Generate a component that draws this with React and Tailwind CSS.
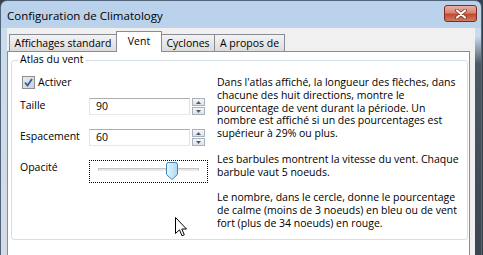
import React from 'react';

function SpinBox({ value }) {
  return (
    <div className="flex">
      <div className="w-[101px] h-[17px] border border-[#abadb3] border-l-[#e2e3ea] border-r-[#dbdfe6] border-b-[#e3e9ef] bg-white pl-[6px] text-[10.5px] leading-[15px]">
        {value}
      </div>
      <div className="ml-[2px] w-[13px] flex flex-col gap-px">
        {['up', 'down'].map((dir) => (
          <div key={dir} className="h-[8px] border border-[#a7b0bd] bg-gradient-to-b from-[#f7f7f7] to-[#dde1e6] flex items-center justify-center">
            <svg width="5" height="3" viewBox="0 0 5 3">
              <path d={dir === 'up' ? 'M0 3 L2.5 0 L5 3 Z' : 'M0 0 L2.5 3 L5 0 Z'} fill="#4d5a6e" />
            </svg>
          </div>
        ))}
      </div>
    </div>
  );
}

function Tab({ label, width, selected, className = '' }) {
  if (selected) {
    return (
      <div className={`relative z-10 -mb-px h-[21px] ${width} border border-b-0 border-[#898c95] bg-white flex justify-center pt-[2px] text-[10.5px] leading-[14px] ${className}`}>
        {label}
      </div>
    );
  }
  return (
    <div className={`h-[17px] ${width} border-t border-[#898c95] bg-gradient-to-b from-[#f3f3f3] to-[#dcdcdc] flex justify-center pt-[1px] text-[10.5px] leading-[14px] ${className}`}>
      {label}
    </div>
  );
}

export default function App() {
  return (
    <div className="relative w-[483px] h-[255px] overflow-hidden bg-[#36414c] font-['Open_Sans',sans-serif] text-black">
      <div className="w-[482px] h-[270px] rounded-t-[7px] border border-[#52647a] bg-gradient-to-b from-[#b9d1ea] to-[#cddff2] flex flex-col">
        {/* title bar */}
        <div className="h-[27px] flex items-start justify-between">
          <span className="ml-[6px] mt-[6px] text-[11.5px] leading-[17px]">Configuration de Climatology</span>
          <div className="mt-[4px] mr-[4px] w-[33px] h-[17px] rounded-[3px] border border-[#7e2c1e] bg-[linear-gradient(to_bottom,#eab1a3_0%,#d98470_45%,#c04a31_55%,#d47a5f_100%)] flex items-center justify-center">
            <svg width="12" height="10" viewBox="0 0 12 10">
              <path d="M2 1.5 L10 8.5 M10 1.5 L2 8.5" stroke="#6e2a1e" strokeWidth="3.6" strokeLinecap="round" />
              <path d="M2 1.5 L10 8.5 M10 1.5 L2 8.5" stroke="#ffffff" strokeWidth="2.2" strokeLinecap="round" />
            </svg>
          </div>
        </div>

        <div className="flex flex-1">
          <div className="w-[6px] bg-gradient-to-b from-[#c9dbee] to-[#d6dbe4]" />

          {/* client area */}
          <div className="flex-1 bg-[#f0f0f0] flex flex-col">
            <div className="mt-[3px] ml-[2px] h-[20px] flex items-end">
              <Tab label="Affichages standard" width="w-[107px]" className="border-l border-[#898c95]" />
              <Tab label="Vent" width="w-[46px]" selected />
              <Tab label="Cyclones" width="w-[53px]" className="border-r border-[#898c95]" />
              <Tab label="A propos de" width="w-[70px]" className="border-r border-[#898c95]" />
            </div>

            <div className="w-[463px] flex-1 border border-[#898c95] bg-white">
              <div className="relative mt-[8px] ml-[3px] w-[457px] h-[180px] rounded-[3px] border border-[#d5dfe5]">
                <span className="absolute -top-[8px] left-[6px] bg-white px-[2px] text-[10.5px] leading-[13px]">Atlas du vent</span>

                <div className="flex pt-[15px] pl-[8px]">
                  <div className="w-[197px] text-[10.5px]">
                    <div className="h-[13px] ml-[2px] flex items-center gap-[3px]">
                      <div className="w-[13px] h-[13px] border border-[#8e8f8f] bg-gradient-to-br from-[#e6ecf3] to-[#c9d2dd] flex items-center justify-center">
                        <svg width="9" height="9" viewBox="0 0 9 9">
                          <path d="M1 4.5 L3.5 7.5 L8 1" stroke="#3b5a94" strokeWidth="1.8" fill="none" />
                        </svg>
                      </div>
                      <span className="leading-[13px]">Activer</span>
                    </div>

                    <div className="mt-[9px] flex h-[17px]">
                      <span className="w-[69px] pt-[1px] leading-[13px]">Taille</span>
                      <SpinBox value="90" />
                    </div>

                    <div className="mt-[14px] flex h-[17px]">
                      <span className="w-[69px] pt-[1px] leading-[13px]">Espacement</span>
                      <SpinBox value="60" />
                    </div>

                    <div className="mt-[14px] flex h-[23px]">
                      <span className="w-[69px] pt-[1px] leading-[13px]">Opacité</span>
                      <div className="relative w-[119px] h-[23px] border border-dotted border-black">
                        <div className="mt-[7px] ml-[8px] w-[101px] h-[3px] border border-[#c3c3c3] border-b-[#eaeaea] bg-[#e6e6e6]" />
                        <svg className="absolute top-[1px] left-[76px]" width="12" height="18" viewBox="0 0 12 18">
                          <defs>
                            <linearGradient id="thumb" x1="0" y1="0" x2="1" y2="0">
                              <stop offset="0" stopColor="#e9f6fd" />
                              <stop offset="1" stopColor="#a8d8f4" />
                            </linearGradient>
                          </defs>
                          <path d="M2.5 0.5 H9.5 Q11.5 0.5 11.5 2.5 V12.5 L6 17.5 L0.5 12.5 V2.5 Q0.5 0.5 2.5 0.5 Z" fill="url(#thumb)" stroke="#3c86bd" />
                        </svg>
                      </div>
                    </div>
                  </div>

                  <div className="flex-1 text-[10.5px] leading-[12.8px]">
                    <div>Dans l'atlas affiché, la longueur des flèches, dans</div>
                    <div>chacune des huit directions, montre le</div>
                    <div>pourcentage de vent durant la période. Un</div>
                    <div>nombre est affiché si un des pourcentages est</div>
                    <div>supérieur à 29% ou plus.</div>
                    <div className="mt-[12.8px]">Les barbules montrent la vitesse du vent. Chaque</div>
                    <div>barbule vaut 5 noeuds.</div>
                    <div className="mt-[12.8px]">Le nombre, dans le cercle, donne le pourcentage</div>
                    <div>de calme (moins de 3 noeuds) en bleu ou de vent</div>
                    <div>fort (plus de 34 noeuds) en rouge.</div>
                  </div>
                </div>
              </div>
            </div>
          </div>

          <div className="w-[6px] bg-[linear-gradient(to_bottom,#c9dbef_0px,#c9dbef_8px,#4c5865_36px,#3a444f_100%)]" />
        </div>
      </div>

      {/* mouse pointer */}
      <svg className="absolute left-[175px] top-[217px]" width="13" height="20" viewBox="0 0 13 20">
        <path d="M0.5 0.5 L0.5 16.5 L4.5 12.8 L7 18.8 L9.3 17.8 L6.8 12 L11.5 12 Z" fill="#ffffff" stroke="#000000" strokeWidth="1" strokeLinejoin="miter" />
      </svg>
    </div>
  );
}
